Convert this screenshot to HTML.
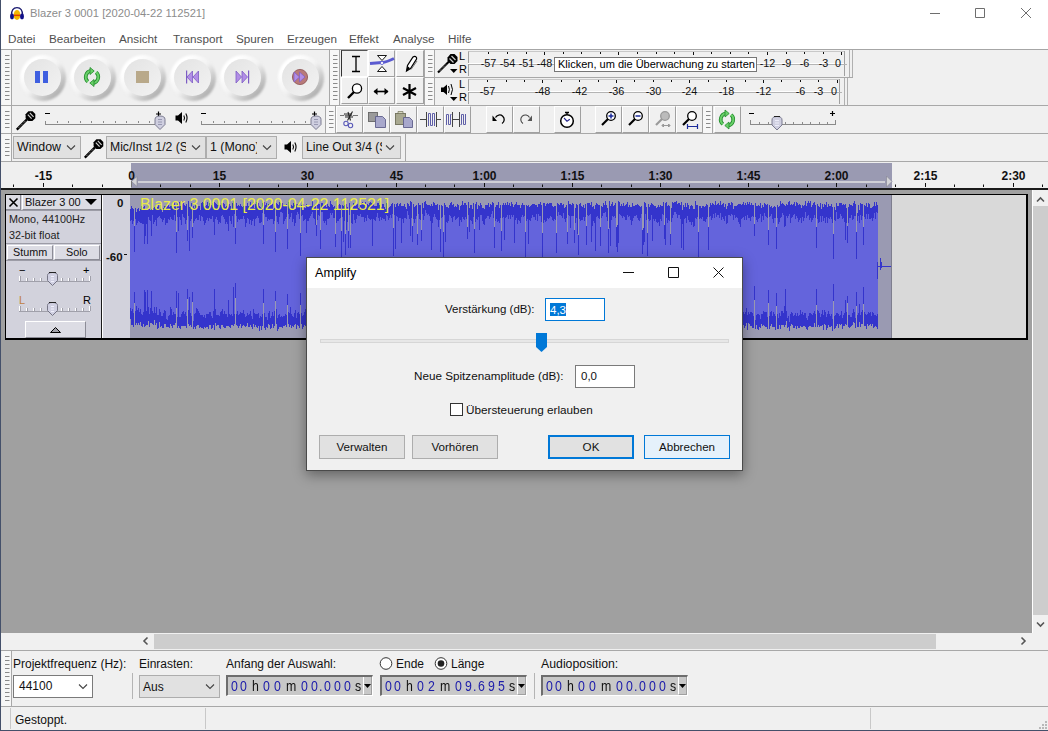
<!DOCTYPE html>
<html><head><meta charset="utf-8"><style>
*{margin:0;padding:0;box-sizing:border-box}
html,body{width:1048px;height:731px;overflow:hidden;background:#f0f0f0;font-family:"Liberation Sans",sans-serif;font-size:12px;color:#000}
.a{position:absolute}
.t{position:absolute;white-space:nowrap;line-height:1}
.grab{position:absolute;background:#f7f7f7;border-right:1px solid #a8a8a8}
.btn{position:absolute;border-radius:50%;background:linear-gradient(135deg,#ffffff 22%,#f2f2f2 50%,#a4a4a4 90%);filter:blur(1.3px)}
.face{position:absolute;border-radius:50%;background:linear-gradient(135deg,#e2e2e2 0%,#eaeaea 45%,#f3f3f3 100%);filter:blur(0.6px)}
.tb{position:absolute;background:#f0f0f0;border-left:1px solid #fff;border-top:1px solid #fff;border-right:1px solid #a0a0a0;border-bottom:1px solid #a0a0a0}
.combo{position:absolute;background:#e1e1e1;border:1px solid #adadad}
svg{position:absolute;overflow:visible}
</style></head><body>
<div class="a" style="left:0px;top:0px;width:1048px;height:49px;background:#fff"></div>
<svg style="left:9px;top:6px" width="16" height="16" viewBox="0 0 16 16">
<ellipse cx="8" cy="9" rx="3.4" ry="4.9" fill="#f5b800"/>
<rect x="4.6" y="8.6" width="6.8" height="1.5" fill="#e04000"/>
<path d="M2.4 9.5 Q2.4 1.6 8 1.6 Q13.6 1.6 13.6 9.5" fill="none" stroke="#1a1a70" stroke-width="1.4"/>
<ellipse cx="3" cy="10.4" rx="1.9" ry="2.9" fill="#10108a"/>
<ellipse cx="13" cy="10.4" rx="1.9" ry="2.9" fill="#10108a"/>
</svg>
<div class="t" style="left:30px;top:8px;font-size:11.2px;color:#8c8c8c">Blazer 3 0001 [2020-04-22 112521]</div>
<svg style="left:0;top:0" width="1" height="1"><path d="M930 13.5h10M975.5 8.5h9v9h-9zM1021 8l10 10M1031 8l-10 10" stroke="#6e6e6e" stroke-width="1" fill="none"/></svg>
<div class="t" style="left:8px;top:33px;color:#505050;font-size:11.7px">Datei</div>
<div class="t" style="left:49px;top:33px;color:#505050;font-size:11.7px">Bearbeiten</div>
<div class="t" style="left:119px;top:33px;color:#505050;font-size:11.7px">Ansicht</div>
<div class="t" style="left:173px;top:33px;color:#505050;font-size:11.7px">Transport</div>
<div class="t" style="left:236px;top:33px;color:#505050;font-size:11.7px">Spuren</div>
<div class="t" style="left:287px;top:33px;color:#505050;font-size:11.7px">Erzeugen</div>
<div class="t" style="left:349px;top:33px;color:#505050;font-size:11.7px">Effekt</div>
<div class="t" style="left:393px;top:33px;color:#505050;font-size:11.7px">Analyse</div>
<div class="t" style="left:448px;top:33px;color:#505050;font-size:11.7px">Hilfe</div>
<div class="a" style="left:0px;top:49px;width:1048px;height:1px;background:#a6a6a6"></div>
<div class="a" style="left:1px;top:105px;width:1047px;height:1px;background:#a8a8a8"></div>
<div class="a" style="left:1px;top:133px;width:1047px;height:1px;background:#a8a8a8"></div>
<div class="a" style="left:1px;top:161px;width:1047px;height:1px;background:#a8a8a8"></div>
<div class="grab" style="left:2px;top:50px;width:10px;height:55px"></div>
<svg style="left:0;top:0" width="1" height="1"><path d="M5 55.5h4.5M5 59.5h4.5M5 63.5h4.5M5 67.5h4.5M5 71.5h4.5M5 75.5h4.5M5 79.5h4.5M5 83.5h4.5M5 87.5h4.5M5 91.5h4.5M5 95.5h4.5M5 99.5h4.5" stroke="#8a8a8a" stroke-width="1"/></svg>
<div class="a" style="left:329px;top:50px;width:1px;height:55px;background:#a8a8a8"></div>
<div class="btn" style="left:19.5px;top:54.5px;width:46px;height:46px"></div>
<div class="face" style="left:24px;top:59px;width:37px;height:37px"></div>
<div class="btn" style="left:69.5px;top:54.5px;width:46px;height:46px"></div>
<div class="face" style="left:74px;top:59px;width:37px;height:37px"></div>
<div class="btn" style="left:119.5px;top:54.5px;width:46px;height:46px"></div>
<div class="face" style="left:124px;top:59px;width:37px;height:37px"></div>
<div class="btn" style="left:169.5px;top:54.5px;width:46px;height:46px"></div>
<div class="face" style="left:174px;top:59px;width:37px;height:37px"></div>
<div class="btn" style="left:219.5px;top:54.5px;width:46px;height:46px"></div>
<div class="face" style="left:224px;top:59px;width:37px;height:37px"></div>
<div class="btn" style="left:277.5px;top:54.5px;width:46px;height:46px"></div>
<div class="face" style="left:282px;top:59px;width:37px;height:37px"></div>
<svg style="left:0;top:0" width="1" height="1">
<rect x="35" y="71" width="5" height="12" fill="#3f5fe0"/><rect x="43" y="71" width="5" height="12" fill="#3f5fe0"/>
<g transform="translate(92 77)">
<path d="M-1 -6.2 A6.3 6.3 0 0 0 -4.2 4.7" stroke="#1f8a2a" stroke-width="3.6" fill="none"/>
<path d="M-1 -6.2 A6.3 6.3 0 0 0 -4.2 4.7" stroke="#6ad06a" stroke-width="2" fill="none"/>
<path d="M1 6.2 A6.3 6.3 0 0 0 4.2 -4.7" stroke="#1f8a2a" stroke-width="3.6" fill="none"/>
<path d="M1 6.2 A6.3 6.3 0 0 0 4.2 -4.7" stroke="#6ad06a" stroke-width="2" fill="none"/>
<path d="M-2 -9.5 L2.2 -6 L-2 -2.5 Z" fill="#6ad06a" stroke="#1f8a2a" stroke-width="0.8"/>
<path d="M2 9.5 L-2.2 6 L2 2.5 Z" fill="#6ad06a" stroke="#1f8a2a" stroke-width="0.8"/>
</g>
<rect x="136" y="71" width="13" height="12" fill="#b9a98a"/>
<g fill="#b28ee6" stroke="#7c5cc4" stroke-width="0.8">
<path d="M192.5 71 L187 77 L192.5 83 Z"/><path d="M198.5 71 L193 77 L198.5 83 Z"/>
<path d="M236 71 L241.5 77 L236 83 Z"/><path d="M242 71 L247.5 77 L242 83 Z"/>
</g>
<rect x="186" y="70.5" width="1.2" height="13" fill="#7c5cc4"/><rect x="248" y="70.5" width="1.2" height="13" fill="#7c5cc4"/>
<circle cx="300" cy="77" r="7.6" fill="#b87a7a" stroke="#8a5050" stroke-width="0.8"/>
<g fill="#b28ee6" stroke="#7c5cc4" stroke-width="0.7"><path d="M294 72 L299.5 77 L294 82 Z"/><path d="M299.5 72 L305 77 L299.5 82 Z"/></g>
</svg>
<div class="grab" style="left:330px;top:50px;width:10px;height:55px"></div>
<svg style="left:0;top:0" width="1" height="1"><path d="M333 55.5h4.5M333 59.5h4.5M333 63.5h4.5M333 67.5h4.5M333 71.5h4.5M333 75.5h4.5M333 79.5h4.5M333 83.5h4.5M333 87.5h4.5M333 91.5h4.5M333 95.5h4.5M333 99.5h4.5" stroke="#8a8a8a" stroke-width="1"/></svg>
<div class="tb" style="left:341px;top:50px;width:27px;height:27px;border-left-color:#333;border-top-color:#555;border-right-color:#fff;border-bottom-color:#fff"></div>
<div class="tb" style="left:368px;top:50px;width:27px;height:27px"></div>
<div class="tb" style="left:396px;top:50px;width:28px;height:27px"></div>
<div class="tb" style="left:341px;top:77px;width:27px;height:27px"></div>
<div class="tb" style="left:368px;top:77px;width:27px;height:27px"></div>
<div class="tb" style="left:396px;top:77px;width:28px;height:27px"></div>
<svg style="left:0;top:0" width="1" height="1">
<path d="M352 56.5h8M352 71.5h8M356 56.5v15" stroke="#000" stroke-width="1.3" fill="none"/>
<path d="M377.5 55.5h9l-4.5 5z M377.5 71.5h9l-4.5 -5z" stroke="#000" stroke-width="0.9" fill="#fff"/>
<path d="M370 63.5 L382 62.5 Q387 62 394 58.5" stroke="#5a5ad0" stroke-width="3" fill="none"/>
<circle cx="382" cy="63" r="1.6" fill="#fff" stroke="#5a5ad0" stroke-width="0.8"/>
<path d="M406.5 71 L407.5 65.5 L413 57 Q415 55.5 416.5 57.5 Q417 59 416 60 L410.5 68.5 Z" fill="#fff" stroke="#000" stroke-width="1.2"/>
<path d="M406.5 71 L407.5 66 L410 68.3 Z" fill="#000"/><path d="M411 69.5 L417 61" stroke="#555" stroke-width="0.8"/>
<circle cx="357" cy="88.5" r="4.6" fill="#fff" stroke="#000" stroke-width="1.3"/>
<path d="M354 92 L348 98" stroke="#000" stroke-width="2.4"/>
<path d="M374 91.5h14" stroke="#000" stroke-width="1.6"/>
<path d="M377.5 88 L373.5 91.5 L377.5 95 Z M384.5 88 L388.5 91.5 L384.5 95 Z" fill="#000"/>
<path d="M409.5 84v15M403 88l13 7M403 95l13-7" stroke="#000" stroke-width="2.2"/>
</svg>
<div class="a" style="left:424px;top:50px;width:1px;height:55px;background:#a8a8a8"></div>
<div class="grab" style="left:425px;top:50px;width:10px;height:27px"></div>
<svg style="left:0;top:0" width="1" height="1"><path d="M428 55.5h4.5M428 59.5h4.5M428 63.5h4.5M428 67.5h4.5M428 71.5h4.5" stroke="#8a8a8a" stroke-width="1"/></svg>
<div class="grab" style="left:425px;top:78px;width:10px;height:27px"></div>
<svg style="left:0;top:0" width="1" height="1"><path d="M428 83.5h4.5M428 87.5h4.5M428 91.5h4.5M428 95.5h4.5M428 99.5h4.5" stroke="#8a8a8a" stroke-width="1"/></svg>
<div class="a" style="left:424px;top:77px;width:429px;height:1px;background:#a8a8a8"></div>
<svg style="left:0;top:0" width="1" height="1">
<path d="M438 72.5 L449 61.5" stroke="#000" stroke-width="2.2"/>
<path d="M439.5 71 L446 64.5" stroke="#fff" stroke-width="0.7" stroke-dasharray="1 1"/>
<path d="M447.5 57.5 L450.5 54 L454.5 54 L457.5 57 L457.5 61 L454.5 64 L450.5 64 L447.5 61 Z" fill="#000" transform="rotate(0)"/>
<path d="M449.5 58.5 L453.5 62.5 M451.5 56 L455.5 60" stroke="#ccc" stroke-width="1.2"/>
<path d="M450 69h7.5l-3.75 4z" fill="#000"/>
<path d="M441 87.5h2.5l3.5-3v10.5l-3.5-3h-2.5z" fill="#000"/>
<path d="M448.5 86 Q450.3 89.5 448.5 93 M451 84 Q454 89.5 451 95" stroke="#000" stroke-width="1" fill="none"/>
<path d="M450 97h7.5l-3.75 4z" fill="#000"/>
</svg>
<div class="t" style="left:459px;top:51px;font-size:11px">L</div>
<div class="t" style="left:459px;top:64px;font-size:11px">R</div>
<div class="t" style="left:459px;top:79px;font-size:11px">L</div>
<div class="t" style="left:459px;top:92px;font-size:11px">R</div>
<div class="a" style="left:468px;top:51px;width:376px;height:12px;border-left:1px solid #a0a0a0;border-top:1px solid #c8c8c8"></div>
<div class="a" style="left:468px;top:63px;width:376px;height:1px;background:#fff"></div>
<div class="a" style="left:468px;top:64px;width:376px;height:1px;background:#b4b4b4"></div>
<div class="a" style="left:468px;top:64px;width:1px;height:12px;background:#a0a0a0"></div>
<div class="a" style="left:844px;top:51px;width:1px;height:25px;background:#a0a0a0"></div>
<div class="a" style="left:843px;top:64px;width:4px;height:1px;background:#b4b4b4"></div>
<div class="t" style="left:468px;top:58px;width:41px;text-align:center;font-size:10.8px;color:#111">-57</div>
<div class="t" style="left:487px;top:58px;width:41px;text-align:center;font-size:10.8px;color:#111">-54</div>
<div class="t" style="left:506px;top:58px;width:41px;text-align:center;font-size:10.8px;color:#111">-51</div>
<div class="t" style="left:524px;top:58px;width:41px;text-align:center;font-size:10.8px;color:#111">-48</div>
<div class="t" style="left:747px;top:58px;width:41px;text-align:center;font-size:10.8px;color:#111">-12</div>
<div class="t" style="left:766px;top:58px;width:41px;text-align:center;font-size:10.8px;color:#111">-9</div>
<div class="t" style="left:784px;top:58px;width:41px;text-align:center;font-size:10.8px;color:#111">-6</div>
<div class="t" style="left:803px;top:58px;width:41px;text-align:center;font-size:10.8px;color:#111">-3</div>
<div class="t" style="left:817.5px;top:58px;width:41px;text-align:center;font-size:10.8px;color:#111">0</div>
<svg style="left:0;top:0" width="1" height="1"><path d="M488.5 52v2M507.5 52v2M526.5 52v2M544.5 52v3M563.5 52v2M581.5 52v2M600.5 52v2M618.5 52v3M637.5 52v2M656.5 52v2M674.5 52v2M693.5 52v3M711.5 52v2M730.5 52v2M748.5 52v2M767.5 52v3M786.5 52v2M804.5 52v2M823.5 52v2M841.5 52v3" stroke="#111" stroke-width="1"/></svg>
<div class="a" style="left:468px;top:79px;width:371px;height:12px;border-left:1px solid #a0a0a0;border-top:1px solid #c8c8c8"></div>
<div class="a" style="left:468px;top:91px;width:371px;height:1px;background:#fff"></div>
<div class="a" style="left:468px;top:92px;width:371px;height:1px;background:#b4b4b4"></div>
<div class="a" style="left:468px;top:92px;width:1px;height:12px;background:#a0a0a0"></div>
<div class="a" style="left:839px;top:79px;width:1px;height:25px;background:#a0a0a0"></div>
<div class="a" style="left:838px;top:92px;width:4px;height:1px;background:#b4b4b4"></div>
<div class="t" style="left:467px;top:86px;width:41px;text-align:center;font-size:10.8px;color:#111">-57</div>
<div class="t" style="left:522px;top:86px;width:41px;text-align:center;font-size:10.8px;color:#111">-48</div>
<div class="t" style="left:559px;top:86px;width:41px;text-align:center;font-size:10.8px;color:#111">-42</div>
<div class="t" style="left:596px;top:86px;width:41px;text-align:center;font-size:10.8px;color:#111">-36</div>
<div class="t" style="left:633px;top:86px;width:41px;text-align:center;font-size:10.8px;color:#111">-30</div>
<div class="t" style="left:669px;top:86px;width:41px;text-align:center;font-size:10.8px;color:#111">-24</div>
<div class="t" style="left:706px;top:86px;width:41px;text-align:center;font-size:10.8px;color:#111">-18</div>
<div class="t" style="left:743px;top:86px;width:41px;text-align:center;font-size:10.8px;color:#111">-12</div>
<div class="t" style="left:780px;top:86px;width:41px;text-align:center;font-size:10.8px;color:#111">-6</div>
<div class="t" style="left:798px;top:86px;width:41px;text-align:center;font-size:10.8px;color:#111">-3</div>
<div class="t" style="left:813.5px;top:86px;width:41px;text-align:center;font-size:10.8px;color:#111">0</div>
<svg style="left:0;top:0" width="1" height="1"><path d="M487.5 80v2M506.5 80v2M524.5 80v2M542.5 80v3M561.5 80v2M579.5 80v2M598.5 80v2M616.5 80v3M634.5 80v2M653.5 80v2M671.5 80v2M689.5 80v3M708.5 80v2M726.5 80v2M745.5 80v2M763.5 80v3M781.5 80v2M800.5 80v2M818.5 80v2M837.5 80v3" stroke="#111" stroke-width="1"/></svg>
<div class="a" style="left:849px;top:50px;width:1px;height:27px;background:#b0b0b0"></div>
<div class="a" style="left:852px;top:50px;width:1px;height:27px;background:#b0b0b0"></div>
<div class="a" style="left:844px;top:78px;width:1px;height:27px;background:#b0b0b0"></div>
<div class="a" style="left:847px;top:78px;width:1px;height:27px;background:#b0b0b0"></div>
<div class="a" style="left:554px;top:57px;width:203px;height:15px;background:#fff;border:1px solid #767676"></div>
<div class="t" style="left:558px;top:59px;font-size:11px;color:#000">Klicken, um die Überwachung zu starten</div>
<div class="grab" style="left:2px;top:106px;width:10px;height:27px"></div>
<svg style="left:0;top:0" width="1" height="1"><path d="M5 111.5h4.5M5 115.5h4.5M5 119.5h4.5M5 123.5h4.5M5 127.5h4.5" stroke="#8a8a8a" stroke-width="1"/></svg>
<div class="a" style="left:325px;top:106px;width:1px;height:27px;background:#a8a8a8"></div>
<div class="grab" style="left:326px;top:106px;width:10px;height:27px"></div>
<svg style="left:0;top:0" width="1" height="1"><path d="M329 111.5h4.5M329 115.5h4.5M329 119.5h4.5M329 123.5h4.5M329 127.5h4.5" stroke="#8a8a8a" stroke-width="1"/></svg>
<div class="tb" style="left:336px;top:106px;width:27px;height:27px"></div>
<div class="tb" style="left:363px;top:106px;width:27px;height:27px"></div>
<div class="tb" style="left:390px;top:106px;width:27px;height:27px"></div>
<div class="tb" style="left:417px;top:106px;width:27px;height:27px"></div>
<div class="tb" style="left:444px;top:106px;width:27px;height:27px"></div>
<div class="tb" style="left:486px;top:106px;width:27px;height:27px"></div>
<div class="tb" style="left:513px;top:106px;width:27px;height:27px"></div>
<div class="tb" style="left:554px;top:106px;width:27px;height:27px"></div>
<div class="tb" style="left:595px;top:106px;width:27px;height:27px"></div>
<div class="tb" style="left:622px;top:106px;width:27px;height:27px"></div>
<div class="tb" style="left:649px;top:106px;width:27px;height:27px"></div>
<div class="tb" style="left:676px;top:106px;width:27px;height:27px"></div>
<div class="grab" style="left:703px;top:106px;width:10px;height:27px"></div>
<svg style="left:0;top:0" width="1" height="1"><path d="M706 111.5h4.5M706 115.5h4.5M706 119.5h4.5M706 123.5h4.5M706 127.5h4.5" stroke="#8a8a8a" stroke-width="1"/></svg>
<div class="tb" style="left:714px;top:106px;width:27px;height:27px"></div>
<div class="grab" style="left:2px;top:134px;width:10px;height:27px"></div>
<svg style="left:0;top:0" width="1" height="1"><path d="M5 139.5h4.5M5 143.5h4.5M5 147.5h4.5M5 151.5h4.5M5 155.5h4.5" stroke="#8a8a8a" stroke-width="1"/></svg>
<div class="a" style="left:405px;top:134px;width:1px;height:27px;background:#a8a8a8"></div>
<svg style="left:16px;top:110px" width="20" height="20" viewBox="0 0 20 20"><path d="M0.8 19.6 L11 9.4" stroke="#000" stroke-width="2.3"/><path d="M2.5 17.9 L9.5 10.9" stroke="#fff" stroke-width="0.7" stroke-dasharray="1 1.2"/><path d="M9.6 4.2 L12.4 1.2 L16.6 1.2 L19.3 4 L19.3 8.2 L16.4 11 L12.3 11 L9.6 8.3 Z" fill="#000"/><path d="M11.8 4.6 L15.6 8.6 M13.8 2.8 L17.6 6.8" stroke="#d0d0d0" stroke-width="1.2"/></svg>
<svg style="left:175px;top:111px" width="14" height="14" viewBox="0 0 14 14"><path d="M0.5 4.5h2.5l4-3.5v12l-4-3.5h-2.5z" fill="#000"/><path d="M8.8 4.5 Q10.3 7 8.8 9.5 M10.8 2.5 Q13.3 7 10.8 11.5" stroke="#000" stroke-width="1.1" fill="none"/></svg>
<svg style="left:0;top:0" width="1" height="1"><path d="M45 124.5H161M45.5 121v3M57.5 121v2M68.5 121v2M80.5 121v2M91.5 121v2M103.5 121v2M115.5 121v2M126.5 121v2M138.5 121v2M149.5 121v2M161.5 121v3" stroke="#8a8a8a" stroke-width="1"/><path d="M45 113.5h5M156 114h5M158.5 111.5v5" stroke="#000" stroke-width="1.2"/><path d="M155 119.5Q155 116 160 116Q165 116 165 119.5v5l-5 5l-5-5z" fill="#cfcfe0" stroke="#6f6f86" stroke-width="0.9"/><path d="M158 119.5h4M158 122h4M158 124.5h4" stroke="#8a8aa6" stroke-width="0.8"/></svg>
<svg style="left:0;top:0" width="1" height="1"><path d="M201 124.5H317M201.5 121v3M213.5 121v2M224.5 121v2M236.5 121v2M247.5 121v2M259.5 121v2M271.5 121v2M282.5 121v2M294.5 121v2M305.5 121v2M317.5 121v3" stroke="#8a8a8a" stroke-width="1"/><path d="M201 113.5h5M312 114h5M314.5 111.5v5" stroke="#000" stroke-width="1.2"/><path d="M311 119.5Q311 116 316 116Q321 116 321 119.5v5l-5 5l-5-5z" fill="#cfcfe0" stroke="#6f6f86" stroke-width="0.9"/><path d="M314 119.5h4M314 122h4M314 124.5h4" stroke="#8a8aa6" stroke-width="0.8"/></svg>
<svg style="left:0;top:0" width="1" height="1">
<path d="M340 115.5h4l1-2.5l1 5l1-5l1 5l1-5l1 5l1-5l1 5l1-2.5h5" stroke="#555" stroke-width="0.8" fill="none"/>
<path d="M352.5 111.5l-5 9M348 112l2.5 8.5" stroke="#222" stroke-width="1.1"/>
<circle cx="346" cy="123.5" r="2.2" fill="none" stroke="#5a5ab8" stroke-width="1.1"/><circle cx="350.5" cy="125.5" r="2.2" fill="none" stroke="#5a5ab8" stroke-width="1.1"/>
<rect x="368.5" y="112.5" width="9" height="9" fill="#9a9a9a" stroke="#666" stroke-width="0.9"/>
<path d="M375.5 116.5h7l3 3v8h-10z" fill="#a8a8cc" stroke="#5f5f8a" stroke-width="0.9"/>
<rect x="395.5" y="113.5" width="10" height="11" fill="#a8a890" stroke="#70705a" stroke-width="0.9"/>
<path d="M398 113.5h5v-2h-5z" fill="#d8d8c0" stroke="#70705a" stroke-width="0.7"/>
<path d="M403.5 117.5h6l3 3v7h-9z" fill="#a8a8cc" stroke="#5f5f8a" stroke-width="0.9"/>
<path d="M420 119.5h6M437 119.5h4M426.5 112v15M436.5 112v15" stroke="#444" stroke-width="1"/>
<path d="M428.5 126V113.5H430.5V125.5H432.5V113.5H434.5V126" stroke="#5f5fa8" stroke-width="1" fill="none"/>
<path d="M452.5 112v15M459.5 112v15M452.5 119.5h7" stroke="#444" stroke-width="1"/>
<path d="M446.5 125V114.5H448.5V124.5H450.5V114.5H451.5M460.5 124.5H461.5V114.5H463.5V124.5H465.5V114" stroke="#5f5fa8" stroke-width="1" fill="none"/>
<path d="M495.5 117.5A4.6 4.6 0 1 1 502 123.5" stroke="#000" stroke-width="1.3" fill="none"/><path d="M492.5 115.5l4.5 5.5l-4.5 0z" fill="#000"/>
<path d="M529.5 117.5A4.6 4.6 0 1 0 523 123.5" stroke="#444" stroke-width="1.1" fill="none"/><path d="M532 115.5l-4.5 5.5l4.5 0z" fill="#555"/>
<circle cx="567" cy="121" r="6.3" fill="#fff" stroke="#000" stroke-width="1.5"/><path d="M565 112.5h4M567 113v1.5" stroke="#000" stroke-width="1.4"/>
<path d="M564 118l3 3.2l2.8-2" stroke="#22228a" stroke-width="1.1" fill="none"/>
<g><circle cx="611" cy="116" r="4.3" fill="#fff" stroke="#000" stroke-width="1.3"/><path d="M608 119l-6 6" stroke="#000" stroke-width="2.2"/><path d="M608.5 116h5M611 113.5v5" stroke="#1a2a9a" stroke-width="1.5"/></g>
<g><circle cx="638" cy="116" r="4.3" fill="#fff" stroke="#000" stroke-width="1.3"/><path d="M635 119l-6 6" stroke="#000" stroke-width="2.2"/><path d="M635.5 116h5" stroke="#1a2a9a" stroke-width="1.5"/></g>
<g><circle cx="665" cy="116" r="4.3" fill="#bbb" stroke="#999" stroke-width="1.3"/><path d="M662 119l-6 6" stroke="#999" stroke-width="2.2"/><path d="M662 125.5h8M663.5 124l-1.5 1.5l1.5 1.5M668.5 124l1.5 1.5l-1.5 1.5" stroke="#999" stroke-width="1"/></g>
<g><circle cx="692" cy="116" r="4.3" fill="#fff" stroke="#000" stroke-width="1.3"/><path d="M689 119l-6 6" stroke="#000" stroke-width="2.2"/><path d="M687 126.5h11M687.5 124v5M697.5 124v5" stroke="#1a2a9a" stroke-width="1.2"/></g>
<g transform="translate(727 119.5)">
<path d="M-1 -6.2 A6.3 6.3 0 0 0 -4.2 4.7" stroke="#1f8a2a" stroke-width="3.6" fill="none"/>
<path d="M-1 -6.2 A6.3 6.3 0 0 0 -4.2 4.7" stroke="#6ad06a" stroke-width="2" fill="none"/>
<path d="M1 6.2 A6.3 6.3 0 0 0 4.2 -4.7" stroke="#1f8a2a" stroke-width="3.6" fill="none"/>
<path d="M1 6.2 A6.3 6.3 0 0 0 4.2 -4.7" stroke="#6ad06a" stroke-width="2" fill="none"/>
<path d="M-2 -9.5 L2.2 -6 L-2 -2.5 Z" fill="#6ad06a" stroke="#1f8a2a" stroke-width="0.8"/>
<path d="M2 9.5 L-2.2 6 L2 2.5 Z" fill="#6ad06a" stroke="#1f8a2a" stroke-width="0.8"/>
</g>
</svg>
<svg style="left:0;top:0" width="1" height="1">
<path d="M750 124.5H836" stroke="#8a8a8a" stroke-width="1"/>
<path d="M750.5 120v4M759.5 122v2M768.5 122v2M776.5 122v2M785.5 122v2M793.5 122v2M802.5 122v2M810.5 122v2M819.5 122v2M827.5 122v2M835.5 120v4" stroke="#8a8a8a" stroke-width="1"/>
<path d="M749 113.5h5M830 113.5h5M832.5 111v5" stroke="#000" stroke-width="1.2"/>
<path d="M772 120Q772 116.5 777 116.5Q782 116.5 782 120v5l-5 5l-5-5z" fill="#cfcfe0" stroke="#6f6f86" stroke-width="0.9"/>
<path d="M774 116.5h6" stroke="#222" stroke-width="1"/>
<path d="M775 120.5h4M775 123h4M775 125.5h4" stroke="#f4f4ff" stroke-width="0.8"/>
</svg>
<div class="a" style="left:13px;top:136px;width:68px;height:23px;background:#e1e1e1;border:1px solid #adadad"></div>
<div class="t" style="left:17px;top:141px;font-size:12.4px;color:#111">Window</div>
<svg style="left:0;top:0" width="1" height="1"><path d="M67 145.5l4 4l4-4" stroke="#444" stroke-width="1.1" fill="none"/></svg>
<svg style="left:84px;top:138px" width="20" height="20" viewBox="0 0 20 20"><path d="M0.8 19.6 L11 9.4" stroke="#000" stroke-width="2.3"/><path d="M2.5 17.9 L9.5 10.9" stroke="#fff" stroke-width="0.7" stroke-dasharray="1 1.2"/><path d="M9.6 4.2 L12.4 1.2 L16.6 1.2 L19.3 4 L19.3 8.2 L16.4 11 L12.3 11 L9.6 8.3 Z" fill="#000"/><path d="M11.8 4.6 L15.6 8.6 M13.8 2.8 L17.6 6.8" stroke="#d0d0d0" stroke-width="1.2"/></svg>
<div class="a" style="left:106px;top:136px;width:100px;height:23px;background:#e1e1e1;border:1px solid #adadad;overflow:hidden"></div>
<div class="t" style="left:110px;top:141px;font-size:12.2px;color:#111">Mic/Inst 1/2 (S</div>
<div class="a" style="left:186px;top:137px;width:19px;height:21px;background:#e1e1e1"></div>
<svg style="left:0;top:0" width="1" height="1"><path d="M192 145.5l4 4l4-4" stroke="#444" stroke-width="1.1" fill="none"/></svg>
<div class="a" style="left:206px;top:136px;width:71px;height:23px;background:#e1e1e1;border:1px solid #adadad"></div>
<div class="t" style="left:210px;top:141px;font-size:12.4px;color:#111">1 (Mono)</div>
<div class="a" style="left:257px;top:137px;width:19px;height:21px;background:#e1e1e1"></div>
<svg style="left:0;top:0" width="1" height="1"><path d="M263 145.5l4 4l4-4" stroke="#444" stroke-width="1.1" fill="none"/></svg>
<svg style="left:284px;top:140px" width="14" height="14" viewBox="0 0 14 14"><path d="M0.5 4.5h2.5l4-3.5v12l-4-3.5h-2.5z" fill="#000"/><path d="M8.8 4.5 Q10.3 7 8.8 9.5 M10.8 2.5 Q13.3 7 10.8 11.5" stroke="#000" stroke-width="1.1" fill="none"/></svg>
<div class="a" style="left:302px;top:136px;width:99px;height:23px;background:#e1e1e1;border:1px solid #adadad"></div>
<div class="t" style="left:306px;top:141px;font-size:12.1px;color:#111">Line Out 3/4 (S</div>
<div class="a" style="left:382px;top:137px;width:18px;height:21px;background:#e1e1e1"></div>
<svg style="left:0;top:0" width="1" height="1"><path d="M386 145.5l4 4l4-4" stroke="#444" stroke-width="1.1" fill="none"/></svg>
<div class="a" style="left:1px;top:162px;width:1047px;height:27px;background:#efefef"></div>
<div class="a" style="left:131px;top:163px;width:761px;height:26px;background:#9a9ab2"></div>
<div class="a" style="left:0px;top:188px;width:1048px;height:2px;background:#1a1a1a"></div>
<div class="a" style="left:1px;top:190px;width:1031px;height:443px;background:#a0a0a0"></div>
<div class="a" style="left:1032px;top:190px;width:1px;height:443px;background:#fff"></div>
<div class="a" style="left:1033px;top:190px;width:15px;height:443px;background:#f0f0f0"></div>
<div class="a" style="left:1033px;top:206px;width:15px;height:409px;background:#cdcdcd"></div>
<div class="a" style="left:1px;top:633px;width:1047px;height:17px;background:#f0f0f0"></div>
<div class="a" style="left:154px;top:634px;width:782px;height:15px;background:#cdcdcd"></div>
<div class="a" style="left:1px;top:650px;width:1047px;height:1px;background:#a8a8a8"></div>
<div class="grab" style="left:2px;top:651px;width:10px;height:55px"></div>
<svg style="left:0;top:0" width="1" height="1"><path d="M5 656.5h4.5M5 660.5h4.5M5 664.5h4.5M5 668.5h4.5M5 672.5h4.5M5 676.5h4.5M5 680.5h4.5M5 684.5h4.5M5 688.5h4.5M5 692.5h4.5M5 696.5h4.5M5 700.5h4.5" stroke="#8a8a8a" stroke-width="1"/></svg>
<div class="a" style="left:1px;top:706px;width:1047px;height:1px;background:#a8a8a8"></div>
<div class="t" style="left:13px;top:658px;font-size:12px;color:#111">Projektfrequenz (Hz):</div>
<div class="a" style="left:13px;top:675px;width:80px;height:23px;background:#fff;border:1px solid #7a7a7a"></div>
<div class="t" style="left:19px;top:680px;font-size:12px;color:#111">44100</div>
<svg style="left:0;top:0" width="1" height="1"><path d="M79 684.5l4 4l4-4" stroke="#444" stroke-width="1.1" fill="none"/></svg>
<div class="a" style="left:132px;top:673px;width:1px;height:26px;background:#b4b4b4"></div>
<div class="t" style="left:139px;top:658px;font-size:12px;color:#111">Einrasten:</div>
<div class="a" style="left:139px;top:675px;width:81px;height:23px;background:#e1e1e1;border:1px solid #adadad"></div>
<div class="t" style="left:143px;top:681px;font-size:12px;color:#111">Aus</div>
<svg style="left:0;top:0" width="1" height="1"><path d="M206 684.5l4 4l4-4" stroke="#444" stroke-width="1.1" fill="none"/></svg>
<div class="t" style="left:226px;top:658px;font-size:12px;color:#111">Anfang der Auswahl:</div>
<svg style="left:0;top:0" width="1" height="1"><circle cx="386" cy="663.5" r="5.8" fill="#fff" stroke="#333" stroke-width="1"/><circle cx="441" cy="663.5" r="5.8" fill="#fff" stroke="#333" stroke-width="1"/><circle cx="441" cy="663.5" r="3.3" fill="#222"/></svg>
<div class="t" style="left:396px;top:658px;font-size:12px;color:#111">Ende</div>
<div class="t" style="left:451px;top:658px;font-size:12px;color:#111">Länge</div>
<div class="a" style="left:226px;top:675px;width:147px;height:21px;background:#c8c8c8;border-top:2px solid #6d6d6d;border-left:2px solid #6d6d6d;border-bottom:1px solid #fff;border-right:1px solid #fff"></div>
<div class="a" style="left:226px;top:680px;width:140px;height:14px;font-size:13px"><span class="t" style="left:5px;top:0;color:#1c1caa;transform:scale(0.95,1.12);transform-origin:0 100%">0</span><span class="t" style="left:14px;top:0;color:#1c1caa;transform:scale(0.95,1.12);transform-origin:0 100%">0</span><span class="t" style="left:26px;top:0;color:#111;transform:scale(0.95,1.12);transform-origin:0 100%">h</span><span class="t" style="left:37px;top:0;color:#1c1caa;transform:scale(0.95,1.12);transform-origin:0 100%">0</span><span class="t" style="left:48px;top:0;color:#1c1caa;transform:scale(0.95,1.12);transform-origin:0 100%">0</span><span class="t" style="left:60px;top:0;color:#111;transform:scale(0.95,1.12);transform-origin:0 100%">m</span><span class="t" style="left:75px;top:0;color:#1c1caa;transform:scale(0.95,1.12);transform-origin:0 100%">0</span><span class="t" style="left:85px;top:0;color:#1c1caa;transform:scale(0.95,1.12);transform-origin:0 100%">0</span><span class="t" style="left:93px;top:0;color:#1c1caa;transform:scale(0.95,1.12);transform-origin:0 100%">.</span><span class="t" style="left:98px;top:0;color:#1c1caa;transform:scale(0.95,1.12);transform-origin:0 100%">0</span><span class="t" style="left:108px;top:0;color:#1c1caa;transform:scale(0.95,1.12);transform-origin:0 100%">0</span><span class="t" style="left:118px;top:0;color:#1c1caa;transform:scale(0.95,1.12);transform-origin:0 100%">0</span><span class="t" style="left:129px;top:0;color:#111;transform:scale(0.95,1.12);transform-origin:0 100%">s</span></div>
<div class="a" style="left:363px;top:677px;width:9px;height:18px;background:#c8c8c8;border-left:1px solid #fff;border-right:1px solid #a0a0a0;border-bottom:1px solid #a0a0a0"></div>
<svg style="left:0;top:0" width="1" height="1"><path d="M364 684h7l-3.5 4z" fill="#000"/></svg>
<div class="a" style="left:380px;top:675px;width:147px;height:21px;background:#c8c8c8;border-top:2px solid #6d6d6d;border-left:2px solid #6d6d6d;border-bottom:1px solid #fff;border-right:1px solid #fff"></div>
<div class="a" style="left:380px;top:680px;width:140px;height:14px;font-size:13px"><span class="t" style="left:5px;top:0;color:#1c1caa;transform:scale(0.95,1.12);transform-origin:0 100%">0</span><span class="t" style="left:14px;top:0;color:#1c1caa;transform:scale(0.95,1.12);transform-origin:0 100%">0</span><span class="t" style="left:26px;top:0;color:#111;transform:scale(0.95,1.12);transform-origin:0 100%">h</span><span class="t" style="left:37px;top:0;color:#1c1caa;transform:scale(0.95,1.12);transform-origin:0 100%">0</span><span class="t" style="left:48px;top:0;color:#1c1caa;transform:scale(0.95,1.12);transform-origin:0 100%">2</span><span class="t" style="left:60px;top:0;color:#111;transform:scale(0.95,1.12);transform-origin:0 100%">m</span><span class="t" style="left:75px;top:0;color:#1c1caa;transform:scale(0.95,1.12);transform-origin:0 100%">0</span><span class="t" style="left:85px;top:0;color:#1c1caa;transform:scale(0.95,1.12);transform-origin:0 100%">9</span><span class="t" style="left:93px;top:0;color:#1c1caa;transform:scale(0.95,1.12);transform-origin:0 100%">.</span><span class="t" style="left:98px;top:0;color:#1c1caa;transform:scale(0.95,1.12);transform-origin:0 100%">6</span><span class="t" style="left:108px;top:0;color:#1c1caa;transform:scale(0.95,1.12);transform-origin:0 100%">9</span><span class="t" style="left:118px;top:0;color:#1c1caa;transform:scale(0.95,1.12);transform-origin:0 100%">5</span><span class="t" style="left:129px;top:0;color:#111;transform:scale(0.95,1.12);transform-origin:0 100%">s</span></div>
<div class="a" style="left:517px;top:677px;width:9px;height:18px;background:#c8c8c8;border-left:1px solid #fff;border-right:1px solid #a0a0a0;border-bottom:1px solid #a0a0a0"></div>
<svg style="left:0;top:0" width="1" height="1"><path d="M518 684h7l-3.5 4z" fill="#000"/></svg>
<div class="a" style="left:534px;top:673px;width:1px;height:26px;background:#b4b4b4"></div>
<div class="t" style="left:541px;top:658px;font-size:12.3px;color:#111">Audioposition:</div>
<div class="a" style="left:541px;top:675px;width:147px;height:21px;background:#c8c8c8;border-top:2px solid #6d6d6d;border-left:2px solid #6d6d6d;border-bottom:1px solid #fff;border-right:1px solid #fff"></div>
<div class="a" style="left:541px;top:680px;width:140px;height:14px;font-size:13px"><span class="t" style="left:5px;top:0;color:#1c1caa;transform:scale(0.95,1.12);transform-origin:0 100%">0</span><span class="t" style="left:14px;top:0;color:#1c1caa;transform:scale(0.95,1.12);transform-origin:0 100%">0</span><span class="t" style="left:26px;top:0;color:#111;transform:scale(0.95,1.12);transform-origin:0 100%">h</span><span class="t" style="left:37px;top:0;color:#1c1caa;transform:scale(0.95,1.12);transform-origin:0 100%">0</span><span class="t" style="left:48px;top:0;color:#1c1caa;transform:scale(0.95,1.12);transform-origin:0 100%">0</span><span class="t" style="left:60px;top:0;color:#111;transform:scale(0.95,1.12);transform-origin:0 100%">m</span><span class="t" style="left:75px;top:0;color:#1c1caa;transform:scale(0.95,1.12);transform-origin:0 100%">0</span><span class="t" style="left:85px;top:0;color:#1c1caa;transform:scale(0.95,1.12);transform-origin:0 100%">0</span><span class="t" style="left:93px;top:0;color:#1c1caa;transform:scale(0.95,1.12);transform-origin:0 100%">.</span><span class="t" style="left:98px;top:0;color:#1c1caa;transform:scale(0.95,1.12);transform-origin:0 100%">0</span><span class="t" style="left:108px;top:0;color:#1c1caa;transform:scale(0.95,1.12);transform-origin:0 100%">0</span><span class="t" style="left:118px;top:0;color:#1c1caa;transform:scale(0.95,1.12);transform-origin:0 100%">0</span><span class="t" style="left:129px;top:0;color:#111;transform:scale(0.95,1.12);transform-origin:0 100%">s</span></div>
<div class="a" style="left:678px;top:677px;width:9px;height:18px;background:#c8c8c8;border-left:1px solid #fff;border-right:1px solid #a0a0a0;border-bottom:1px solid #a0a0a0"></div>
<svg style="left:0;top:0" width="1" height="1"><path d="M679 684h7l-3.5 4z" fill="#000"/></svg>
<div class="a" style="left:10px;top:708px;width:1px;height:21px;background:#c8c8c8"></div>
<div class="a" style="left:205px;top:708px;width:1px;height:21px;background:#c8c8c8"></div>
<div class="a" style="left:870px;top:708px;width:1px;height:21px;background:#c8c8c8"></div>
<div class="t" style="left:15px;top:714px;font-size:12px;color:#111">Gestoppt.</div>
<svg style="left:0;top:0" width="1" height="1"><path d="M147.5 637.5l-3.5 3.5l3.5 3.5M1021.5 637.5l3.5 3.5l-3.5 3.5M1037 201.5l3.5-3.5l3.5 3.5M1037 622.5l3.5 3.5l3.5-3.5" stroke="#555" stroke-width="1.6" fill="none"/></svg>
<svg style="left:0;top:0" width="1" height="1"><path d="M1045 721h2v2h-2zM1042 724h2v2h-2zM1045 724h2v2h-2zM1039 727h2v2h-2zM1042 727h2v2h-2zM1045 727h2v2h-2z" fill="#b8b8b8"/></svg>
<div class="a" style="left:0px;top:730px;width:1048px;height:1px;background:#44506a"></div>
<div class="a" style="left:0px;top:0px;width:1px;height:731px;background:#44506a"></div>
<div class="t" style="left:3.5px;top:170px;width:80px;text-align:center;font-size:12px;font-weight:bold;color:#111">-15</div>
<div class="t" style="left:91.5px;top:170px;width:80px;text-align:center;font-size:12px;font-weight:bold;color:#111">0</div>
<div class="t" style="left:179.5px;top:170px;width:80px;text-align:center;font-size:12px;font-weight:bold;color:#111">15</div>
<div class="t" style="left:267.5px;top:170px;width:80px;text-align:center;font-size:12px;font-weight:bold;color:#111">30</div>
<div class="t" style="left:356.5px;top:170px;width:80px;text-align:center;font-size:12px;font-weight:bold;color:#111">45</div>
<div class="t" style="left:444.5px;top:170px;width:80px;text-align:center;font-size:12px;font-weight:bold;color:#111">1:00</div>
<div class="t" style="left:532.5px;top:170px;width:80px;text-align:center;font-size:12px;font-weight:bold;color:#111">1:15</div>
<div class="t" style="left:620.5px;top:170px;width:80px;text-align:center;font-size:12px;font-weight:bold;color:#111">1:30</div>
<div class="t" style="left:708.5px;top:170px;width:80px;text-align:center;font-size:12px;font-weight:bold;color:#111">1:45</div>
<div class="t" style="left:796.5px;top:170px;width:80px;text-align:center;font-size:12px;font-weight:bold;color:#111">2:00</div>
<div class="t" style="left:885.5px;top:170px;width:80px;text-align:center;font-size:12px;font-weight:bold;color:#111">2:15</div>
<div class="t" style="left:973.5px;top:170px;width:80px;text-align:center;font-size:12px;font-weight:bold;color:#111">2:30</div>
<svg style="left:0;top:0" width="1" height="1"><path d="M43.5 183v4M131.5 183v4M219.5 183v4M307.5 183v4M396.5 183v4M484.5 183v4M572.5 183v4M660.5 183v4M748.5 183v4M836.5 183v4M925.5 183v4M1013.5 183v4M13.5 184.5v2.5M72.5 184.5v2.5M102.5 184.5v2.5M160.5 184.5v2.5M190.5 184.5v2.5M249.5 184.5v2.5M278.5 184.5v2.5M337.5 184.5v2.5M366.5 184.5v2.5M425.5 184.5v2.5M454.5 184.5v2.5M513.5 184.5v2.5M542.5 184.5v2.5M601.5 184.5v2.5M631.5 184.5v2.5M689.5 184.5v2.5M719.5 184.5v2.5M778.5 184.5v2.5M807.5 184.5v2.5M866.5 184.5v2.5M895.5 184.5v2.5M954.5 184.5v2.5M983.5 184.5v2.5M1042.5 184.5v2.5" stroke="#111" stroke-width="1"/></svg>
<div class="a" style="left:138px;top:181px;width:747px;height:2px;background:#cfcfd6"></div>
<svg style="left:0;top:0" width="1" height="1"><path d="M137 176.5v10l-5.5-5z" fill="#d4d4d8" stroke="#8a8a96" stroke-width="0.7"/><path d="M886.5 176v11l5.5-5.5z" fill="#d4d4d8" stroke="#8a8a96" stroke-width="0.7"/><path d="M131.5 181v6" stroke="#777" stroke-width="1"/></svg>
<div class="a" style="left:5px;top:194px;width:1023px;height:146px;background:#000"></div>
<div class="a" style="left:6px;top:195px;width:95px;height:143px;background:#d2d2dc"></div>
<div class="a" style="left:102px;top:195px;width:28px;height:143px;background:#d2d2dc;border-left:1px solid #fff"></div>
<div class="a" style="left:130px;top:195px;width:762px;height:143px;background:#9a9ab2"></div>
<div class="a" style="left:892px;top:195px;width:134px;height:143px;background:#d9d9d9"></div>
<div class="a" style="left:891px;top:195px;width:1px;height:143px;background:#7e7e8e"></div>
<div class="a" style="left:1026px;top:194px;width:2px;height:145px;background:#000"></div>
<svg style="left:0;top:0" width="1" height="1" shape-rendering="crispEdges"><path d="M130.5 209V319M131.5 206V325M132.5 208V325M133.5 209V327M134.5 226V303M135.5 208V325M136.5 212V323M137.5 209V325M138.5 208V323M139.5 211V325M140.5 209V322M141.5 206V326M142.5 208V327M143.5 207V324M144.5 206V327M145.5 209V326M146.5 209V325M147.5 210V325M148.5 206V321M149.5 209V327M150.5 210V323M151.5 209V323M152.5 203V324M153.5 208V325M154.5 207V320M155.5 206V325M156.5 208V323M157.5 207V329M158.5 205V328M159.5 208V322M160.5 207V327M161.5 208V326M162.5 212V328M163.5 208V328M164.5 206V324M165.5 206V324M166.5 206V327M167.5 206V327M168.5 205V327M169.5 207V328M170.5 206V324M171.5 206V326M172.5 206V328M173.5 208V325M174.5 202V325M175.5 206V323M176.5 232V308M177.5 203V328M178.5 204V326M179.5 202V328M180.5 206V329M181.5 210V326M182.5 201V326M183.5 203V326M184.5 205V326M185.5 206V326M186.5 204V328M187.5 230V299M188.5 201V324M189.5 207V326M190.5 207V325M191.5 203V327M192.5 227V302M193.5 206V329M194.5 208V327M195.5 204V329M196.5 204V326M197.5 206V325M198.5 206V325M199.5 206V328M200.5 210V327M201.5 203V328M202.5 202V328M203.5 203V329M204.5 206V327M205.5 206V328M206.5 205V327M207.5 202V327M208.5 206V329M209.5 203V325M210.5 203V325M211.5 205V329M212.5 203V328M213.5 207V325M214.5 202V330M215.5 203V323M216.5 204V326M217.5 205V325M218.5 205V325M219.5 205V328M220.5 205V329M221.5 203V325M222.5 203V325M223.5 203V327M224.5 204V328M225.5 207V328M226.5 206V326M227.5 208V326M228.5 204V326M229.5 204V327M230.5 206V328M231.5 209V325M232.5 203V325M233.5 201V326M234.5 204V324M235.5 228V298M236.5 203V325M237.5 206V326M238.5 205V328M239.5 206V326M240.5 204V324M241.5 206V328M242.5 207V326M243.5 206V325M244.5 205V326M245.5 206V327M246.5 206V326M247.5 203V323M248.5 206V327M249.5 207V327M250.5 202V325M251.5 207V327M252.5 204V329M253.5 202V324M254.5 208V327M255.5 204V325M256.5 202V327M257.5 204V328M258.5 203V326M259.5 206V331M260.5 207V326M261.5 208V330M262.5 203V326M263.5 225V303M264.5 202V328M265.5 205V330M266.5 203V327M267.5 206V328M268.5 204V324M269.5 206V325M270.5 203V329M271.5 205V328M272.5 204V324M273.5 209V328M274.5 208V326M275.5 232V301M276.5 203V324M277.5 204V331M278.5 205V329M279.5 202V327M280.5 203V327M281.5 204V327M282.5 203V328M283.5 206V326M284.5 205V326M285.5 205V325M286.5 204V327M287.5 229V305M288.5 202V324M289.5 206V327M290.5 207V325M291.5 205V328M292.5 206V326M293.5 203V327M294.5 205V325M295.5 209V324M296.5 204V329M297.5 204V325M298.5 205V326M299.5 206V328M300.5 233V305M301.5 205V324M302.5 204V329M303.5 204V327M304.5 206V325M305.5 208V326M306.5 204V329M307.5 207V327M308.5 207V326M309.5 205V325M310.5 206V326M311.5 206V329M312.5 201V323M313.5 207V326M314.5 205V326M315.5 206V326M316.5 225V302M317.5 205V326M318.5 204V324M319.5 204V328M320.5 230V301M321.5 203V325M322.5 203V326M323.5 205V327M324.5 205V328M325.5 205V325M326.5 207V325M327.5 204V330M328.5 206V327M329.5 207V326M330.5 201V327M331.5 204V329M332.5 205V327M333.5 207V328M334.5 206V327M335.5 234V304M336.5 208V327M337.5 206V328M338.5 205V326M339.5 204V322M340.5 205V327M341.5 231V300M342.5 205V324M343.5 206V326M344.5 205V326M345.5 234V307M346.5 204V328M347.5 207V328M348.5 231V303M349.5 203V328M350.5 235V302M351.5 209V330M352.5 209V326M353.5 203V323M354.5 205V326M355.5 206V328M356.5 205V325M357.5 204V327M358.5 208V328M359.5 207V326M360.5 202V327M361.5 203V326M362.5 202V322M363.5 204V324M364.5 205V327M365.5 202V324M366.5 207V325M367.5 204V330M368.5 205V329M369.5 203V325M370.5 202V326M371.5 203V327M372.5 205V326M373.5 203V329M374.5 206V327M375.5 206V328M376.5 206V329M377.5 203V325M378.5 203V329M379.5 205V323M380.5 201V325M381.5 207V329M382.5 204V325M383.5 204V325M384.5 207V329M385.5 209V323M386.5 203V328M387.5 204V323M388.5 208V328M389.5 207V329M390.5 206V330M391.5 204V327M392.5 203V328M393.5 228V302M394.5 204V326M395.5 207V328M396.5 204V325M397.5 203V328M398.5 206V326M399.5 204V328M400.5 203V330M401.5 206V326M402.5 206V328M403.5 206V329M404.5 204V327M405.5 207V323M406.5 209V324M407.5 203V324M408.5 204V328M409.5 206V327M410.5 201V328M411.5 202V325M412.5 226V306M413.5 204V327M414.5 207V325M415.5 206V330M416.5 205V325M417.5 234V300M418.5 203V327M419.5 205V327M420.5 205V327M421.5 230V299M422.5 203V327M423.5 208V325M424.5 202V326M425.5 201V324M426.5 204V326M427.5 205V326M428.5 205V327M429.5 205V326M430.5 206V326M431.5 204V328M432.5 206V325M433.5 202V331M434.5 203V323M435.5 205V327M436.5 205V323M437.5 204V329M438.5 210V325M439.5 205V326M440.5 229V305M441.5 205V326M442.5 206V328M443.5 232V305M444.5 203V325M445.5 205V326M446.5 207V321M447.5 207V325M448.5 208V326M449.5 205V325M450.5 203V329M451.5 202V328M452.5 205V327M453.5 204V326M454.5 207V324M455.5 206V327M456.5 207V328M457.5 204V326M458.5 205V328M459.5 210V323M460.5 206V328M461.5 205V326M462.5 201V327M463.5 205V326M464.5 203V326M465.5 203V329M466.5 205V321M467.5 227V298M468.5 202V330M469.5 208V327M470.5 205V325M471.5 205V326M472.5 209V327M473.5 203V328M474.5 229V298M475.5 204V322M476.5 202V329M477.5 209V325M478.5 205V322M479.5 206V324M480.5 203V324M481.5 205V327M482.5 208V325M483.5 208V328M484.5 209V323M485.5 205V326M486.5 205V326M487.5 205V323M488.5 203V326M489.5 207V327M490.5 204V326M491.5 205V326M492.5 202V326M493.5 203V327M494.5 227V301M495.5 207V325M496.5 205V329M497.5 205V327M498.5 202V330M499.5 208V326M500.5 205V329M501.5 231V305M502.5 205V327M503.5 203V326M504.5 205V328M505.5 203V325M506.5 205V325M507.5 202V326M508.5 205V325M509.5 203V325M510.5 206V325M511.5 202V324M512.5 204V327M513.5 207V329M514.5 205V326M515.5 204V328M516.5 202V325M517.5 205V329M518.5 205V328M519.5 205V329M520.5 208V326M521.5 205V325M522.5 203V328M523.5 205V326M524.5 205V327M525.5 232V304M526.5 205V328M527.5 206V328M528.5 205V328M529.5 207V326M530.5 206V328M531.5 205V330M532.5 204V325M533.5 204V330M534.5 204V331M535.5 205V324M536.5 205V325M537.5 207V327M538.5 204V327M539.5 204V324M540.5 202V327M541.5 205V327M542.5 233V300M543.5 203V325M544.5 203V325M545.5 206V325M546.5 204V324M547.5 203V325M548.5 204V323M549.5 203V324M550.5 203V327M551.5 203V326M552.5 206V326M553.5 207V327M554.5 206V326M555.5 206V325M556.5 233V307M557.5 203V326M558.5 204V327M559.5 205V329M560.5 203V327M561.5 203V325M562.5 205V331M563.5 204V328M564.5 208V328M565.5 207V325M566.5 205V326M567.5 232V305M568.5 201V329M569.5 204V328M570.5 204V329M571.5 205V328M572.5 203V325M573.5 204V330M574.5 230V299M575.5 208V326M576.5 204V325M577.5 205V324M578.5 235V305M579.5 204V325M580.5 203V327M581.5 206V328M582.5 207V326M583.5 205V329M584.5 208V328M585.5 204V327M586.5 226V303M587.5 203V328M588.5 203V327M589.5 203V325M590.5 205V325M591.5 202V329M592.5 207V324M593.5 206V326M594.5 209V328M595.5 205V324M596.5 203V324M597.5 204V325M598.5 205V324M599.5 205V328M600.5 227V301M601.5 206V327M602.5 207V327M603.5 203V327M604.5 205V329M605.5 201V326M606.5 205V326M607.5 208V325M608.5 229V303M609.5 201V327M610.5 206V322M611.5 204V325M612.5 202V331M613.5 206V329M614.5 205V325M615.5 203V330M616.5 227V301M617.5 225V300M618.5 201V328M619.5 202V326M620.5 206V328M621.5 204V328M622.5 206V326M623.5 203V328M624.5 206V331M625.5 205V323M626.5 204V327M627.5 202V324M628.5 207V325M629.5 205V328M630.5 207V327M631.5 207V328M632.5 203V325M633.5 206V324M634.5 206V330M635.5 205V324M636.5 205V329M637.5 204V322M638.5 205V327M639.5 206V327M640.5 207V326M641.5 206V324M642.5 230V304M643.5 228V301M644.5 202V323M645.5 203V325M646.5 207V328M647.5 233V299M648.5 204V326M649.5 207V326M650.5 205V328M651.5 203V327M652.5 204V327M653.5 205V328M654.5 206V328M655.5 206V327M656.5 208V329M657.5 207V328M658.5 205V325M659.5 207V327M660.5 205V332M661.5 206V324M662.5 206V324M663.5 202V329M664.5 225V306M665.5 203V328M666.5 202V329M667.5 206V326M668.5 205V324M669.5 206V326M670.5 234V305M671.5 208V326M672.5 202V327M673.5 203V324M674.5 202V327M675.5 202V327M676.5 201V329M677.5 204V327M678.5 203V329M679.5 203V326M680.5 205V328M681.5 202V324M682.5 210V326M683.5 205V328M684.5 207V328M685.5 203V329M686.5 207V327M687.5 203V325M688.5 205V328M689.5 209V326M690.5 206V327M691.5 205V327M692.5 206V327M693.5 209V326M694.5 209V324M695.5 201V325M696.5 205V325M697.5 205V326M698.5 232V299M699.5 206V324M700.5 206V325M701.5 208V327M702.5 206V327M703.5 206V330M704.5 207V326M705.5 206V326M706.5 204V329M707.5 205V326M708.5 227V302M709.5 207V327M710.5 203V328M711.5 205V331M712.5 203V329M713.5 204V324M714.5 205V325M715.5 201V328M716.5 205V327M717.5 204V326M718.5 203V327M719.5 205V329M720.5 201V325M721.5 205V330M722.5 204V329M723.5 203V329M724.5 207V328M725.5 204V326M726.5 209V326M727.5 206V326M728.5 203V328M729.5 203V327M730.5 205V329M731.5 202V325M732.5 203V328M733.5 209V328M734.5 206V329M735.5 206V324M736.5 206V327M737.5 205V329M738.5 204V325M739.5 204V326M740.5 204V326M741.5 205V327M742.5 204V328M743.5 202V325M744.5 205V328M745.5 203V326M746.5 205V323M747.5 202V330M748.5 204V323M749.5 202V324M750.5 205V326M751.5 203V326M752.5 205V328M753.5 205V328M754.5 224V300M755.5 203V329M756.5 206V325M757.5 206V329M758.5 205V330M759.5 206V327M760.5 203V328M761.5 208V324M762.5 205V326M763.5 207V325M764.5 203V326M765.5 204V327M766.5 205V327M767.5 204V329M768.5 230V303M769.5 205V329M770.5 207V326M771.5 206V324M772.5 208V327M773.5 207V327M774.5 206V327M775.5 207V330M776.5 227V306M777.5 205V329M778.5 207V329M779.5 206V325M780.5 201V329M781.5 204V325M782.5 203V325M783.5 204V325M784.5 205V327M785.5 206V325M786.5 204V321M787.5 205V328M788.5 202V327M789.5 201V331M790.5 205V326M791.5 204V324M792.5 205V325M793.5 204V328M794.5 202V328M795.5 206V326M796.5 202V329M797.5 203V326M798.5 205V328M799.5 204V328M800.5 205V326M801.5 208V327M802.5 205V327M803.5 206V326M804.5 205V326M805.5 201V327M806.5 206V329M807.5 203V330M808.5 201V327M809.5 203V326M810.5 201V326M811.5 207V327M812.5 205V327M813.5 203V327M814.5 202V323M815.5 205V327M816.5 227V305M817.5 204V327M818.5 206V325M819.5 207V327M820.5 203V326M821.5 209V326M822.5 204V325M823.5 207V330M824.5 204V324M825.5 205V325M826.5 202V330M827.5 207V328M828.5 204V325M829.5 206V327M830.5 206V327M831.5 204V326M832.5 207V331M833.5 234V301M834.5 207V329M835.5 210V328M836.5 203V326M837.5 206V324M838.5 206V328M839.5 203V324M840.5 203V325M841.5 203V324M842.5 205V329M843.5 204V326M844.5 205V326M845.5 204V324M846.5 208V325M847.5 226V303M848.5 207V327M849.5 204V328M850.5 205V327M851.5 205V326M852.5 206V325M853.5 203V322M854.5 201V323M855.5 204V328M856.5 232V306M857.5 213V327M858.5 205V327M859.5 210V322M860.5 203V327M861.5 204V324M862.5 204V324M863.5 227V304M864.5 205V326M865.5 206V326M866.5 203V329M867.5 207V324M868.5 203V326M869.5 204V325M870.5 208V324M871.5 208V326M872.5 207V324M873.5 206V328M874.5 202V327M875.5 206V326M876.5 202V327M877.5 205V329" stroke="#3434cc" stroke-width="1"/><path d="M130.5 221V308M131.5 220V311M132.5 224V309M133.5 221V313M134.5 252V292M135.5 219V311M136.5 225V306M137.5 223V310M138.5 221V308M139.5 222V312M140.5 223V309M141.5 223V314M142.5 224V315M143.5 224V312M144.5 244V290M145.5 236V292M146.5 224V311M147.5 244V290M148.5 217V307M149.5 220V314M150.5 221V308M151.5 236V291M152.5 215V311M153.5 224V313M154.5 222V307M155.5 220V313M156.5 226V307M157.5 218V315M158.5 217V315M159.5 216V309M160.5 218V312M161.5 219V316M162.5 222V316M163.5 220V313M164.5 218V310M165.5 225V311M166.5 223V319M167.5 223V320M168.5 219V316M169.5 220V315M170.5 217V307M171.5 219V309M172.5 220V315M173.5 220V312M174.5 215V314M175.5 221V314M176.5 253V291M177.5 217V317M178.5 231V293M179.5 217V317M180.5 220V317M181.5 225V314M182.5 214V312M183.5 217V311M184.5 218V314M185.5 224V312M186.5 220V316M187.5 241V289M188.5 216V310M189.5 251V297M190.5 221V313M191.5 219V316M192.5 238V292M193.5 223V321M194.5 221V314M195.5 219V313M196.5 218V308M197.5 220V309M198.5 220V311M199.5 215V313M200.5 221V315M201.5 216V315M202.5 217V315M203.5 221V317M204.5 225V315M205.5 223V318M206.5 220V314M207.5 218V314M208.5 221V314M209.5 218V312M210.5 219V312M211.5 219V316M212.5 216V318M213.5 222V311M214.5 235V289M215.5 219V309M216.5 217V315M217.5 220V315M218.5 224V315M219.5 222V316M220.5 223V312M221.5 216V311M222.5 215V309M223.5 217V314M224.5 219V311M225.5 224V314M226.5 222V314M227.5 224V317M228.5 231V300M229.5 216V314M230.5 221V315M231.5 224V314M232.5 216V316M233.5 227V287M234.5 214V314M235.5 244V283M236.5 216V314M237.5 222V311M238.5 219V315M239.5 220V314M240.5 219V312M241.5 219V313M242.5 219V313M243.5 216V310M244.5 219V314M245.5 227V317M246.5 223V316M247.5 218V313M248.5 219V315M249.5 224V314M250.5 220V311M251.5 225V316M252.5 221V319M253.5 219V309M254.5 226V313M255.5 219V314M256.5 218V314M257.5 216V314M258.5 218V313M259.5 223V318M260.5 223V316M261.5 222V317M262.5 213V314M263.5 244V289M264.5 214V313M265.5 217V317M266.5 217V317M267.5 221V320M268.5 219V313M269.5 220V311M270.5 219V318M271.5 219V316M272.5 219V312M273.5 224V316M274.5 221V311M275.5 252V291M276.5 216V309M277.5 222V318M278.5 224V315M279.5 217V314M280.5 212V317M281.5 212V316M282.5 213V317M283.5 224V316M284.5 221V316M285.5 219V314M286.5 217V315M287.5 249V294M288.5 214V312M289.5 219V313M290.5 217V307M291.5 213V314M292.5 222V316M293.5 219V317M294.5 226V313M295.5 223V310M296.5 215V318M297.5 212V313M298.5 214V312M299.5 219V314M300.5 256V293M301.5 216V313M302.5 215V316M303.5 221V315M304.5 220V312M305.5 219V309M306.5 233V293M307.5 221V314M308.5 221V314M309.5 218V312M310.5 216V311M311.5 214V312M312.5 212V307M313.5 218V312M314.5 219V316M315.5 225V313M316.5 236V285M317.5 220V312M318.5 215V310M319.5 216V315M320.5 249V285M321.5 212V313M322.5 212V316M323.5 221V317M324.5 223V316M325.5 221V313M326.5 225V310M327.5 219V315M328.5 219V310M329.5 218V309M330.5 213V309M331.5 215V314M332.5 213V312M333.5 218V320M334.5 218V315M335.5 247V291M336.5 223V315M337.5 221V313M338.5 221V315M339.5 219V309M340.5 218V312M341.5 258V288M342.5 217V307M343.5 242V301M344.5 221V309M345.5 255V300M346.5 230V297M347.5 222V316M348.5 248V287M349.5 215V318M350.5 248V286M351.5 223V315M352.5 224V314M353.5 214V308M354.5 220V314M355.5 223V318M356.5 219V314M357.5 215V314M358.5 216V316M359.5 216V313M360.5 214V317M361.5 217V311M362.5 217V308M363.5 217V309M364.5 222V311M365.5 218V310M366.5 221V314M367.5 215V319M368.5 218V318M369.5 219V315M370.5 220V316M371.5 219V315M372.5 246V295M373.5 219V317M374.5 220V316M375.5 221V314M376.5 217V317M377.5 213V313M378.5 218V318M379.5 221V312M380.5 217V313M381.5 220V318M382.5 218V313M383.5 219V315M384.5 219V322M385.5 221V313M386.5 215V314M387.5 216V313M388.5 220V317M389.5 218V318M390.5 215V320M391.5 218V318M392.5 214V319M393.5 256V285M394.5 215V314M395.5 249V305M396.5 216V312M397.5 217V317M398.5 221V315M399.5 218V319M400.5 218V321M401.5 243V294M402.5 219V319M403.5 223V317M404.5 218V316M405.5 218V309M406.5 219V310M407.5 211V311M408.5 215V317M409.5 219V314M410.5 236V292M411.5 218V310M412.5 242V291M413.5 219V317M414.5 223V313M415.5 219V315M416.5 216V313M417.5 245V286M418.5 214V314M419.5 219V313M420.5 220V318M421.5 241V284M422.5 214V317M423.5 220V312M424.5 216V310M425.5 210V310M426.5 213V315M427.5 215V318M428.5 214V314M429.5 216V310M430.5 221V309M431.5 250V305M432.5 223V312M433.5 217V318M434.5 214V308M435.5 217V314M436.5 219V308M437.5 220V315M438.5 227V314M439.5 220V316M440.5 252V291M441.5 218V316M442.5 217V316M443.5 259V298M444.5 215V309M445.5 242V302M446.5 222V308M447.5 223V309M448.5 221V315M449.5 215V309M450.5 216V318M451.5 218V317M452.5 222V313M453.5 217V311M454.5 216V310M455.5 220V317M456.5 219V317M457.5 218V315M458.5 217V317M459.5 226V309M460.5 220V315M461.5 222V312M462.5 217V314M463.5 219V312M464.5 220V308M465.5 217V313M466.5 219V306M467.5 239V286M468.5 215V319M469.5 232V300M470.5 220V314M471.5 221V314M472.5 224V316M473.5 217V316M474.5 253V285M475.5 222V312M476.5 219V319M477.5 220V311M478.5 217V309M479.5 230V289M480.5 215V311M481.5 215V317M482.5 221V313M483.5 224V315M484.5 225V314M485.5 219V317M486.5 218V315M487.5 216V309M488.5 216V312M489.5 219V316M490.5 217V315M491.5 214V310M492.5 211V310M493.5 218V314M494.5 248V286M495.5 221V306M496.5 219V311M497.5 222V310M498.5 221V319M499.5 223V313M500.5 218V317M501.5 251V292M502.5 218V318M503.5 217V312M504.5 240V289M505.5 218V311M506.5 217V312M507.5 215V311M508.5 219V313M509.5 215V315M510.5 219V313M511.5 215V311M512.5 217V310M513.5 215V314M514.5 243V295M515.5 220V316M516.5 218V312M517.5 224V319M518.5 220V314M519.5 221V319M520.5 223V311M521.5 217V312M522.5 215V318M523.5 217V316M524.5 216V315M525.5 257V288M526.5 221V314M527.5 219V317M528.5 244V298M529.5 220V316M530.5 221V316M531.5 218V317M532.5 215V316M533.5 217V317M534.5 217V322M535.5 220V312M536.5 214V313M537.5 221V315M538.5 214V315M539.5 216V311M540.5 216V315M541.5 222V316M542.5 257V288M543.5 223V311M544.5 220V311M545.5 222V311M546.5 221V310M547.5 218V314M548.5 219V311M549.5 218V317M550.5 216V316M551.5 217V316M552.5 220V314M553.5 221V313M554.5 219V311M555.5 220V312M556.5 253V298M557.5 216V314M558.5 212V314M559.5 215V311M560.5 215V311M561.5 216V311M562.5 218V317M563.5 213V316M564.5 219V318M565.5 222V313M566.5 218V312M567.5 244V295M568.5 215V314M569.5 216V317M570.5 228V287M571.5 216V317M572.5 216V312M573.5 216V314M574.5 243V282M575.5 223V312M576.5 218V310M577.5 234V294M578.5 255V297M579.5 219V308M580.5 221V313M581.5 220V317M582.5 220V314M583.5 217V316M584.5 221V316M585.5 217V316M586.5 245V294M587.5 215V317M588.5 216V318M589.5 215V315M590.5 214V313M591.5 242V291M592.5 226V289M593.5 221V316M594.5 223V315M595.5 251V295M596.5 217V312M597.5 216V316M598.5 218V313M599.5 219V317M600.5 246V286M601.5 218V312M602.5 216V310M603.5 213V311M604.5 213V319M605.5 212V316M606.5 217V313M607.5 221V311M608.5 253V286M609.5 228V288M610.5 246V296M611.5 220V314M612.5 216V317M613.5 217V314M614.5 216V311M615.5 218V314M616.5 247V287M617.5 252V289M618.5 243V289M619.5 214V316M620.5 215V316M621.5 216V314M622.5 218V313M623.5 216V314M624.5 217V319M625.5 220V313M626.5 220V314M627.5 215V315M628.5 217V312M629.5 216V313M630.5 220V311M631.5 225V313M632.5 221V310M633.5 218V310M634.5 216V314M635.5 216V311M636.5 215V313M637.5 218V311M638.5 220V312M639.5 221V313M640.5 218V312M641.5 214V309M642.5 254V290M643.5 245V293M644.5 242V293M645.5 214V313M646.5 220V317M647.5 256V286M648.5 219V314M649.5 221V311M650.5 220V315M651.5 215V314M652.5 241V287M653.5 219V318M654.5 221V317M655.5 219V315M656.5 222V317M657.5 223V310M658.5 222V312M659.5 226V317M660.5 219V321M661.5 221V312M662.5 214V314M663.5 215V316M664.5 239V296M665.5 245V294M666.5 218V313M667.5 223V312M668.5 220V308M669.5 221V314M670.5 245V291M671.5 222V313M672.5 218V315M673.5 215V311M674.5 212V311M675.5 212V315M676.5 214V317M677.5 218V315M678.5 215V316M679.5 215V313M680.5 219V314M681.5 248V291M682.5 224V315M683.5 250V286M684.5 219V317M685.5 218V319M686.5 223V314M687.5 216V313M688.5 220V313M689.5 222V314M690.5 222V312M691.5 225V316M692.5 222V314M693.5 227V312M694.5 226V313M695.5 218V311M696.5 219V312M697.5 217V311M698.5 258V289M699.5 219V312M700.5 218V316M701.5 219V314M702.5 217V315M703.5 221V316M704.5 221V314M705.5 222V316M706.5 219V315M707.5 217V311M708.5 250V287M709.5 217V317M710.5 216V318M711.5 220V321M712.5 218V318M713.5 214V314M714.5 218V311M715.5 213V316M716.5 217V312M717.5 215V314M718.5 215V313M719.5 218V319M720.5 213V310M721.5 220V318M722.5 217V317M723.5 219V313M724.5 221V314M725.5 216V311M726.5 224V313M727.5 223V314M728.5 215V317M729.5 215V314M730.5 216V313M731.5 214V313M732.5 215V318M733.5 220V316M734.5 215V318M735.5 218V313M736.5 217V316M737.5 218V315M738.5 222V309M739.5 224V310M740.5 227V291M741.5 219V313M742.5 218V316M743.5 217V312M744.5 220V314M745.5 216V312M746.5 220V308M747.5 215V315M748.5 218V312M749.5 218V314M750.5 221V312M751.5 217V312M752.5 216V313M753.5 217V316M754.5 236V286M755.5 217V320M756.5 220V315M757.5 222V314M758.5 219V314M759.5 218V315M760.5 214V319M761.5 222V314M762.5 216V314M763.5 220V311M764.5 213V312M765.5 216V312M766.5 217V312M767.5 218V317M768.5 245V290M769.5 217V316M770.5 216V312M771.5 214V311M772.5 219V316M773.5 223V312M774.5 218V314M775.5 218V316M776.5 249V293M777.5 218V314M778.5 224V318M779.5 222V313M780.5 218V316M781.5 217V311M782.5 213V311M783.5 215V313M784.5 227V306M785.5 226V289M786.5 216V311M787.5 218V318M788.5 216V316M789.5 214V322M790.5 223V314M791.5 218V312M792.5 217V313M793.5 215V316M794.5 214V315M795.5 219V313M796.5 216V316M797.5 218V313M798.5 222V316M799.5 220V315M800.5 218V310M801.5 223V314M802.5 217V312M803.5 221V315M804.5 218V313M805.5 212V313M806.5 218V318M807.5 216V320M808.5 215V316M809.5 220V313M810.5 218V313M811.5 222V314M812.5 220V315M813.5 218V313M814.5 215V311M815.5 218V314M816.5 248V289M817.5 219V310M818.5 223V311M819.5 222V313M820.5 216V317M821.5 222V314M822.5 216V310M823.5 221V315M824.5 218V310M825.5 223V312M826.5 217V317M827.5 223V314M828.5 218V311M829.5 219V314M830.5 217V316M831.5 219V314M832.5 223V319M833.5 259V284M834.5 220V316M835.5 221V315M836.5 212V313M837.5 219V313M838.5 219V314M839.5 218V316M840.5 214V315M841.5 216V311M842.5 219V318M843.5 218V315M844.5 222V313M845.5 240V300M846.5 223V312M847.5 243V296M848.5 223V315M849.5 218V315M850.5 218V317M851.5 215V317M852.5 220V313M853.5 219V309M854.5 216V312M855.5 216V318M856.5 259V292M857.5 221V315M858.5 216V313M859.5 223V304M860.5 215V315M861.5 220V312M862.5 216V310M863.5 245V287M864.5 217V312M865.5 219V314M866.5 214V315M867.5 219V314M868.5 214V312M869.5 219V313M870.5 219V312M871.5 218V316M872.5 221V312M873.5 218V313M874.5 213V315M875.5 219V315M876.5 212V316M877.5 213V314" stroke="#6464dc" stroke-width="1"/><path d="M877.5 262V279M878 266.5H891" stroke="#3434cc" stroke-width="1"/><path d="M880.5 258V270M881.5 262V268" stroke="#3434cc" stroke-width="1"/></svg>
<div class="t" style="left:140px;top:197px;font-size:15.92px;color:#eaea48">Blazer 3 0001 [2020-04-22 112521]</div>
<div class="a" style="left:6px;top:195px;width:15px;height:15px;background:#dcdce4;border-right:1px solid #8c8c96;border-bottom:1px solid #8c8c96"></div>
<svg style="left:0;top:0" width="1" height="1"><path d="M9.5 198.5l8 8M17.5 198.5l-8 8" stroke="#000" stroke-width="1.6"/></svg>
<div class="a" style="left:22px;top:195px;width:79px;height:15px;background:#dcdce4;border-bottom:1px solid #8c8c96;border-left:1px solid #fff"></div>
<div class="t" style="left:25px;top:197px;font-size:11px;color:#111">Blazer 3 00</div>
<svg style="left:0;top:0" width="1" height="1"><path d="M85 199h12l-6 6z" fill="#000"/></svg>
<div class="a" style="left:6px;top:210px;width:95px;height:1px;background:#9c9ca6"></div>
<div class="t" style="left:9px;top:214px;font-size:10.8px;color:#222">Mono, 44100Hz</div>
<div class="t" style="left:9px;top:230px;font-size:10.8px;color:#222">32-bit float</div>
<div class="a" style="left:6px;top:243px;width:95px;height:1px;background:#9c9ca6"></div>
<div class="a" style="left:7px;top:245px;width:46px;height:15px;background:#dcdce4;border:1px solid #fff;border-right-color:#8c8c96;border-bottom-color:#8c8c96"></div>
<div class="a" style="left:54px;top:245px;width:46px;height:15px;background:#dcdce4;border:1px solid #fff;border-right-color:#8c8c96;border-bottom-color:#8c8c96"></div>
<div class="t" style="left:13px;top:247px;font-size:10.8px;color:#111">Stumm</div>
<div class="t" style="left:66px;top:247px;font-size:10.8px;color:#111">Solo</div>
<div class="a" style="left:6px;top:260px;width:95px;height:1px;background:#9c9ca6"></div>
<svg style="left:0;top:0" width="1" height="1"><path d="M19 281.5h71M20.5 276v5M27.5 278v3M34.5 278v3M41.5 278v3M48.5 278v3M55.5 278v3M62.5 278v3M69.5 278v3M76.5 278v3M83.5 278v3M90.5 276v5" stroke="#a0a0aa" stroke-width="1"/><path d="M19.5 276v5M26.5 278v3M33.5 278v3M40.5 278v3M47.5 278v3M54.5 278v3M61.5 278v3M68.5 278v3M75.5 278v3M82.5 278v3M89.5 276v5" stroke="#ffffff" stroke-width="1"/><path d="M47.5 275.5Q47.5 272.5 52.5 272.5Q57.5 272.5 57.5 275.5v5l-5 5l-5 -5z" fill="#d0d0e2" stroke="#6a6a7a" stroke-width="0.9"/><path d="M49 272.5h7" stroke="#222" stroke-width="1"/><path d="M51 276.5h3M51 279h3M51 281.5h3" stroke="#f4f4ff" stroke-width="0.9"/></svg>
<div class="t" style="left:19px;top:265px;font-size:11px;color:#000">−</div>
<div class="t" style="left:83px;top:265px;font-size:11px;color:#000">+</div>
<svg style="left:0;top:0" width="1" height="1"><path d="M19 311.5h71M20.5 306v5M27.5 308v3M34.5 308v3M41.5 308v3M48.5 308v3M55.5 308v3M62.5 308v3M69.5 308v3M76.5 308v3M83.5 308v3M90.5 306v5" stroke="#a0a0aa" stroke-width="1"/><path d="M19.5 306v5M26.5 308v3M33.5 308v3M40.5 308v3M47.5 308v3M54.5 308v3M61.5 308v3M68.5 308v3M75.5 308v3M82.5 308v3M89.5 306v5" stroke="#ffffff" stroke-width="1"/><path d="M47.5 305.5Q47.5 302.5 52.5 302.5Q57.5 302.5 57.5 305.5v5l-5 5l-5 -5z" fill="#d0d0e2" stroke="#6a6a7a" stroke-width="0.9"/><path d="M49 302.5h7" stroke="#222" stroke-width="1"/><path d="M51 306.5h3M51 309h3M51 311.5h3" stroke="#f4f4ff" stroke-width="0.9"/></svg>
<div class="t" style="left:19px;top:295px;font-size:11px;color:#c08040">L</div>
<div class="t" style="left:83px;top:295px;font-size:11px;color:#000">R</div>
<div class="a" style="left:25px;top:321px;width:61px;height:17px;background:#dcdce4;border:1px solid #fff;border-right-color:#8c8c96;border-bottom-color:#8c8c96"></div>
<svg style="left:0;top:0" width="1" height="1"><path d="M50.5 332.5h10l-5-5z" fill="#a0a0a8" stroke="#000" stroke-width="1"/></svg>
<div class="a" style="left:101px;top:195px;width:1px;height:143px;background:#1a1a1a"></div>
<div class="t" style="left:117px;top:198px;font-size:11.5px;font-weight:bold;color:#111">0</div>
<div class="t" style="left:106px;top:252px;font-size:11.5px;font-weight:bold;color:#111">-60</div>
<div class="a" style="left:124px;top:254px;width:3px;height:1px;background:#111"></div>
<div class="a" style="left:306px;top:257px;width:437px;height:214px;box-shadow:0 4px 12px rgba(0,0,0,.38);background:#f0f0f0;border:1px solid #4a4a4a"></div>
<div class="a" style="left:307px;top:258px;width:435px;height:30px;background:#fff"></div>
<div class="t" style="left:315px;top:267px;font-size:12.6px;color:#000">Amplify</div>
<svg style="left:0;top:0" width="1" height="1"><path d="M623 272.5h11M668.5 267.5h10v10h-10zM713.5 267.5l10 10M723.5 267.5l-10 10" stroke="#111" stroke-width="1" fill="none"/></svg>
<div class="t" style="left:445px;top:304px;font-size:11.5px;color:#111">Verstärkung (dB):</div>
<div class="a" style="left:545px;top:298px;width:60px;height:23px;background:#fff;border:1px solid #0078d7"></div>
<div class="a" style="left:550px;top:303px;width:16px;height:13px;background:#0078d7"></div>
<div class="t" style="left:550px;top:305px;font-size:11.5px;color:#fff">4,3</div>
<div class="a" style="left:320px;top:339px;width:409px;height:4px;background:#e7e7e7;border:1px solid #d6d6d6"></div>
<svg style="left:0;top:0" width="1" height="1"><path d="M536 333h11v14l-5.5 5l-5.5-5z" fill="#0078d7"/></svg>
<div class="t" style="left:414px;top:370px;font-size:11.7px;color:#111">Neue Spitzenamplitude (dB):</div>
<div class="a" style="left:575px;top:365px;width:60px;height:23px;background:#fff;border:1px solid #7a7a7a"></div>
<div class="t" style="left:581px;top:371px;font-size:11.5px;color:#111">0,0</div>
<div class="a" style="left:450px;top:403px;width:13px;height:13px;background:#fff;border:1px solid #333"></div>
<div class="t" style="left:466px;top:404px;font-size:11.75px;color:#111">Übersteuerung erlauben</div>
<div class="a" style="left:319px;top:435px;width:86px;height:24px;background:#e1e1e1;border:1px solid #adadad"></div>
<div class="t" style="left:319px;top:441px;font-size:11.6px;color:#111"><div style="width:86px;text-align:center">Verwalten</div></div>
<div class="a" style="left:412px;top:435px;width:86px;height:24px;background:#e1e1e1;border:1px solid #adadad"></div>
<div class="t" style="left:412px;top:441px;font-size:11.6px;color:#111"><div style="width:86px;text-align:center">Vorhören</div></div>
<div class="a" style="left:548px;top:435px;width:86px;height:24px;background:#e1e1e1;border:2px solid #0078d7"></div>
<div class="t" style="left:548px;top:441px;font-size:11.6px;color:#111"><div style="width:86px;text-align:center">OK</div></div>
<div class="a" style="left:644px;top:435px;width:86px;height:24px;background:#e5f1fb;border:1px solid #0078d7"></div>
<div class="t" style="left:644px;top:441px;font-size:11.6px;color:#111"><div style="width:86px;text-align:center">Abbrechen</div></div>
</body></html>
